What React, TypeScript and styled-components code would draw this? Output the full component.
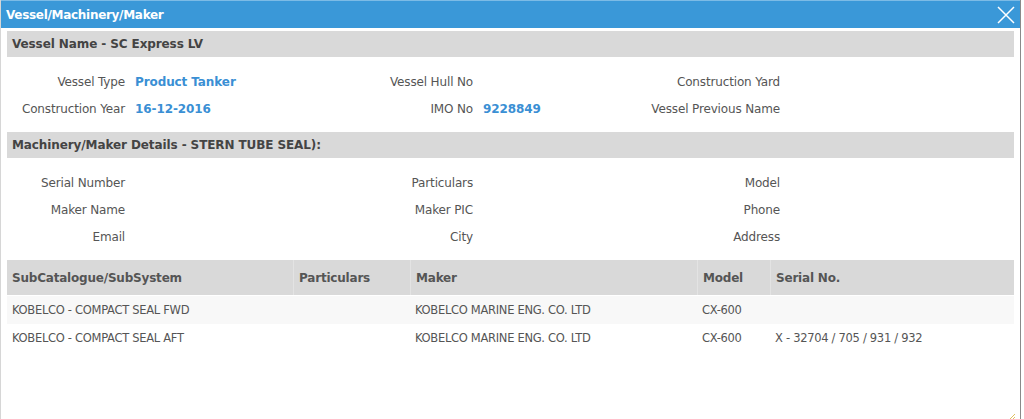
import React from "react";
import styled, { createGlobalStyle } from "styled-components";

const Global = createGlobalStyle`
  html, body { margin: 0; padding: 0; background: #fff; }
  body { font-family: "DejaVu Sans", Verdana, sans-serif; }
`;

const Dialog = styled.div`
  width: 1021px;
  height: 419px;
  box-sizing: border-box;
  border-left: 1px solid #d6d6d6;
  border-right: 1px solid #8a8a8a;
  background: #fff;
  display: flex;
  flex-direction: column;
  position: relative;
`;

const TitleBar = styled.div`
  height: 28px;
  background: #3a98d8;
  border-top: 1px solid #7cbbe6;
  box-sizing: border-box;
  display: flex;
  align-items: center;
  justify-content: space-between;
  padding: 0 4px 0 5px;
  margin-bottom: 3px;
`;

const Title = styled.div`
  color: #fff;
  font-weight: bold;
  font-size: 12px;
  letter-spacing: -0.3px;
`;

const Close = styled.div`
  width: 20px;
  height: 20px;
  display: flex;
  align-items: center;
  justify-content: center;
`;

const Body = styled.div`
  padding: 0 6px 0 6px;
  display: flex;
  flex-direction: column;
`;

const SectionHeader = styled.div`
  height: 26px;
  background: #d9d9d9;
  color: #444;
  font-weight: bold;
  font-size: 12px;
  display: flex;
  align-items: center;
  padding-left: 5px;
  letter-spacing: -0.1px;
`;

const InfoGrid = styled.div`
  display: grid;
  grid-template-columns: 118px 210px 118px 147px 140px 1fr;
  grid-auto-rows: 27px;
  column-gap: 10px;
  padding: 11px 0 10px;
  align-items: center;
`;

const Label = styled.div`
  text-align: right;
  color: #555;
  font-size: 12px;
  letter-spacing: -0.15px;
  white-space: nowrap;
`;

const Value = styled.div`
  color: #3a8fd4;
  font-weight: bold;
  font-size: 12px;
  letter-spacing: -0.1px;
  white-space: nowrap;
`;

const Table = styled.div`
  display: grid;
  grid-template-columns: 286px 117px 287px 73px 1fr;
`;

const HeadCell = styled.div<{ first?: boolean }>`
  height: 35px;
  margin-bottom: 1px;
  background: #d9d9d9;
  border-left: ${(p) => (p.first ? "none" : "1px solid #e3e3e3")};
  color: #555;
  font-weight: bold;
  font-size: 12px;
  display: flex;
  align-items: center;
  padding-left: 5px;
  letter-spacing: -0.2px;
`;

const Cell = styled.div<{ striped?: boolean }>`
  height: 28px;
  background: ${(p) => (p.striped ? "#f8f8f8" : "#fff")};
  color: #555;
  font-size: 11.5px;
  display: flex;
  align-items: center;
  padding-left: 5px;
  letter-spacing: -0.3px;
  white-space: nowrap;
`;

const Resize = styled.div`
  position: absolute;
  right: 4px;
  bottom: 3px;
  width: 10px;
  height: 10px;
`;

const vesselInfo: [string, string][] = [
  ["Vessel Type", "Product Tanker"],
  ["Vessel Hull No", ""],
  ["Construction Yard", ""],
  ["Construction Year", "16-12-2016"],
  ["IMO No", "9228849"],
  ["Vessel Previous Name", ""],
];

const makerInfo: [string, string][] = [
  ["Serial Number", ""],
  ["Particulars", ""],
  ["Model", ""],
  ["Maker Name", ""],
  ["Maker PIC", ""],
  ["Phone", ""],
  ["Email", ""],
  ["City", ""],
  ["Address", ""],
];

const headers = ["SubCatalogue/SubSystem", "Particulars", "Maker", "Model", "Serial No."];
const rows = [
  ["KOBELCO - COMPACT SEAL FWD", "", "KOBELCO MARINE ENG. CO. LTD", "CX-600", ""],
  ["KOBELCO - COMPACT SEAL AFT", "", "KOBELCO MARINE ENG. CO. LTD", "CX-600", "X - 32704 / 705 / 931 / 932"],
];

export default function App() {
  return (
    <>
      <Global />
      <Dialog>
        <TitleBar>
          <Title>Vessel/Machinery/Maker</Title>
          <Close>
            <svg width="18" height="18" viewBox="0 0 18 18">
              <path d="M1 1 L17 17 M17 1 L1 17" stroke="#fff" strokeWidth="1.5" fill="none" />
            </svg>
          </Close>
        </TitleBar>
        <Body>
          <SectionHeader>Vessel Name - SC Express LV</SectionHeader>
          <InfoGrid>
            {vesselInfo.map(([l, v]) => (
              <React.Fragment key={l}>
                <Label>{l}</Label>
                <Value>{v}</Value>
              </React.Fragment>
            ))}
          </InfoGrid>
          <SectionHeader>Machinery/Maker Details - STERN TUBE SEAL):</SectionHeader>
          <InfoGrid>
            {makerInfo.map(([l, v]) => (
              <React.Fragment key={l}>
                <Label>{l}</Label>
                <Value>{v}</Value>
              </React.Fragment>
            ))}
          </InfoGrid>
          <Table>
            {headers.map((h, i) => (
              <HeadCell key={h} first={i === 0}>
                {h}
              </HeadCell>
            ))}
            {rows.map((r, ri) =>
              r.map((c, ci) => (
                <Cell key={`${ri}-${ci}`} striped={ri === 0}>
                  {c}
                </Cell>
              ))
            )}
          </Table>
        </Body>
        <Resize>
          <svg width="10" height="10" viewBox="0 0 10 10">
            <path d="M9 3 L3 9 M9 6 L6 9" stroke="#e0c060" strokeWidth="1" fill="none" />
          </svg>
        </Resize>
      </Dialog>
    </>
  );
}
